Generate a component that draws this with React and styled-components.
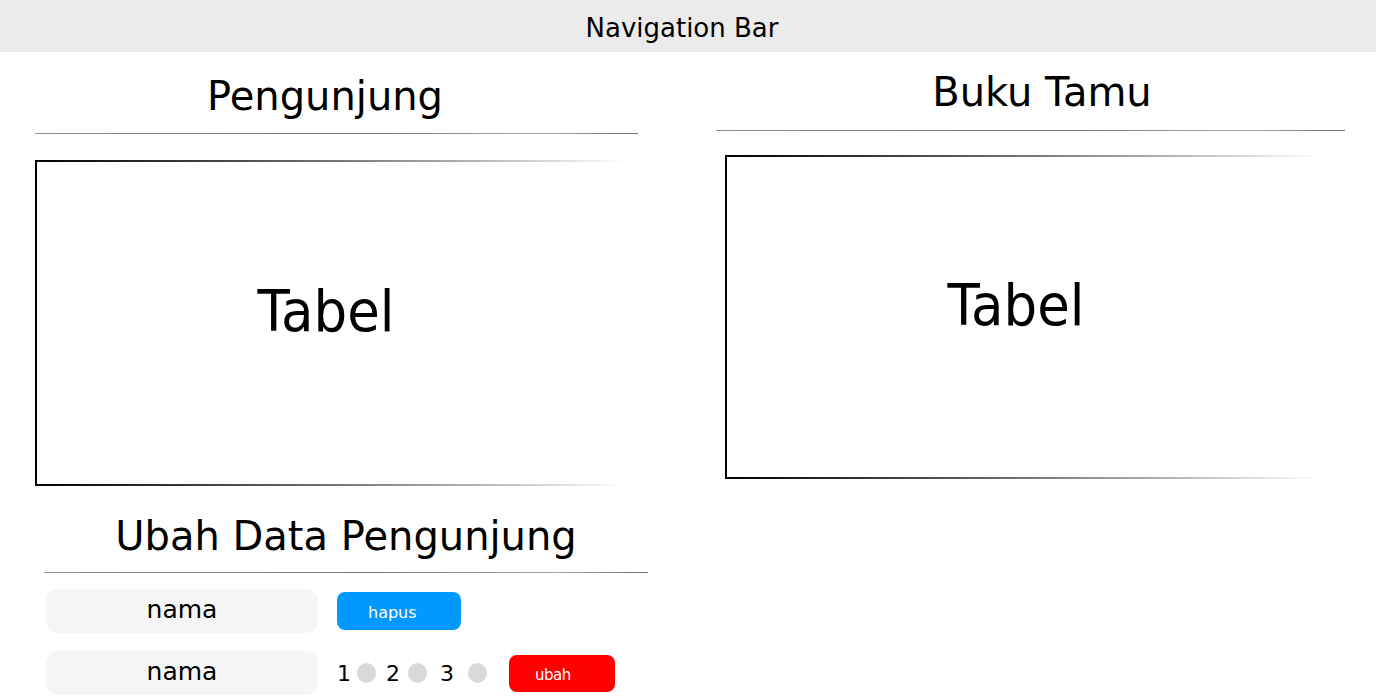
import React from "react";
import styled, { createGlobalStyle } from "styled-components";

const GlobalStyle = createGlobalStyle`
  * {
    box-sizing: border-box;
  }

  body {
    margin: 0;
    background: #ffffff;
    color: #000000;
    font-family: "DejaVu Sans", Verdana, sans-serif;
    overflow: hidden;
  }
`;

const NavBar = styled.header`
  height: 52px;
  display: flex;
  align-items: center;
  justify-content: center;
  padding: 3px 12px 0 0;
  background: #ebebeb;
  font-size: 26px;
`;

const Main = styled.main`
  display: flex;
  align-items: flex-start;
  gap: 68px;
  padding-left: 35px;
`;

const Column = styled.section`
  width: ${(p) => p.$width}px;
  display: flex;
  flex-direction: column;
  padding-top: ${(p) => p.$top}px;
`;

const Title = styled.h2`
  margin: ${(p) => p.$top || 0}px 0 0;
  padding: 0 ${(p) => Math.max(0, -(p.$shift || 0))}px 0 ${(p) => Math.max(0, p.$shift || 0)}px;
  font-size: 40px;
  font-weight: 400;
  line-height: 48px;
  text-align: center;
`;

const Rule = styled.hr`
  width: ${(p) => p.$width}px;
  margin: ${(p) => p.$top}px 0 0;
  height: 1px;
  border: none;
  background: linear-gradient(to right, #8f8f8f, #7a7a7a 55%, #a8a8a8 85%, #6f6f6f);
`;

const TableBox = styled.div`
  width: ${(p) => p.$width}px;
  height: ${(p) => p.$height}px;
  margin: ${(p) => p.$top}px 0 0 ${(p) => p.$left || 0}px;
  display: flex;
  align-items: center;
  justify-content: center;
  padding: 0 ${(p) => p.$shift}px 24px 0;
  border: 2px solid #000;
  border-image: linear-gradient(to right, #000 0%, #5a5a5a 40%, #b5b5b5 75%, rgba(255, 255, 255, 0) 100%) 1;
  font-size: 53px;

  span {
    display: inline-block;
    transform: scaleY(1.06);
  }
`;

const EditPanel = styled.div`
  width: 604px;
  margin-left: 9px;
  display: flex;
  flex-direction: column;
`;

const FormRow = styled.div`
  display: flex;
  align-items: center;
  margin-top: ${(p) => p.$top}px;
  padding-left: 2px;
`;

const NameField = styled.input`
  width: 272px;
  height: 44px;
  padding: 0 0 4px;
  border: none;
  border-radius: 12px;
  background: #f5f5f5;
  font-family: inherit;
  font-size: 25px;
  color: #000;
  text-align: center;
  outline: none;
`;

const ActionButton = styled.button`
  width: ${(p) => p.$width}px;
  height: ${(p) => p.$height}px;
  margin-left: ${(p) => p.$left}px;
  padding: 3px 0 0 ${(p) => p.$pad}px;
  border: none;
  border-radius: 8px;
  background: ${(p) => p.$color};
  color: #ffffff;
  font-family: inherit;
  font-size: ${(p) => p.$size}px;
  letter-spacing: ${(p) => p.$tracking || 0}px;
  text-align: left;
`;

const Options = styled.div`
  display: flex;
  align-items: center;
  margin-left: 19px;
`;

const Option = styled.label`
  display: flex;
  align-items: center;
  gap: ${(p) => p.$gap}px;
  margin-right: ${(p) => p.$after}px;
  font-size: 22px;
`;

const Dot = styled.span`
  width: 19px;
  height: 20px;
  border-radius: 50%;
  background: #d9d9d9;
`;

const options = [
  { label: "1", gap: 6, after: 10 },
  { label: "2", gap: 8, after: 13 },
  { label: "3", gap: 14, after: 0 },
];

export default function App() {
  return (
    <>
      <GlobalStyle />
      <NavBar>Navigation Bar</NavBar>
      <Main>
        <Column $width={613} $top={20}>
          <Title $shift={-33}>Pengunjung</Title>
          <Rule $width={603} $top={13} />
          <TableBox $width={592} $height={326} $top={26} $shift={10}>
            <span>Tabel</span>
          </TableBox>

          <EditPanel>
            <Title $top={26}>Ubah Data Pengunjung</Title>
            <Rule $width={604} $top={12} />
            <FormRow $top={16}>
              <NameField defaultValue="nama" readOnly />
              <ActionButton $width={124} $height={38} $left={19} $pad={31} $size={16} $color="#0099ff">
                hapus
              </ActionButton>
            </FormRow>
            <FormRow $top={18}>
              <NameField defaultValue="nama" readOnly />
              <Options>
                {options.map((o) => (
                  <Option key={o.label} $gap={o.gap} $after={o.after}>
                    {o.label}
                    <Dot />
                  </Option>
                ))}
              </Options>
              <ActionButton
                $width={106}
                $height={37}
                $left={22}
                $pad={26}
                $size={15}
                $tracking={-0.5}
                $color="#ff0000"
              >
                ubah
              </ActionButton>
            </FormRow>
          </EditPanel>
        </Column>

        <Column $width={629} $top={16}>
          <Title $shift={23}>Buku Tamu</Title>
          <Rule $width={629} $top={14} />
          <TableBox $width={597} $height={324} $top={24} $left={9} $shift={15}>
            <span>Tabel</span>
          </TableBox>
        </Column>
      </Main>
    </>
  );
}
